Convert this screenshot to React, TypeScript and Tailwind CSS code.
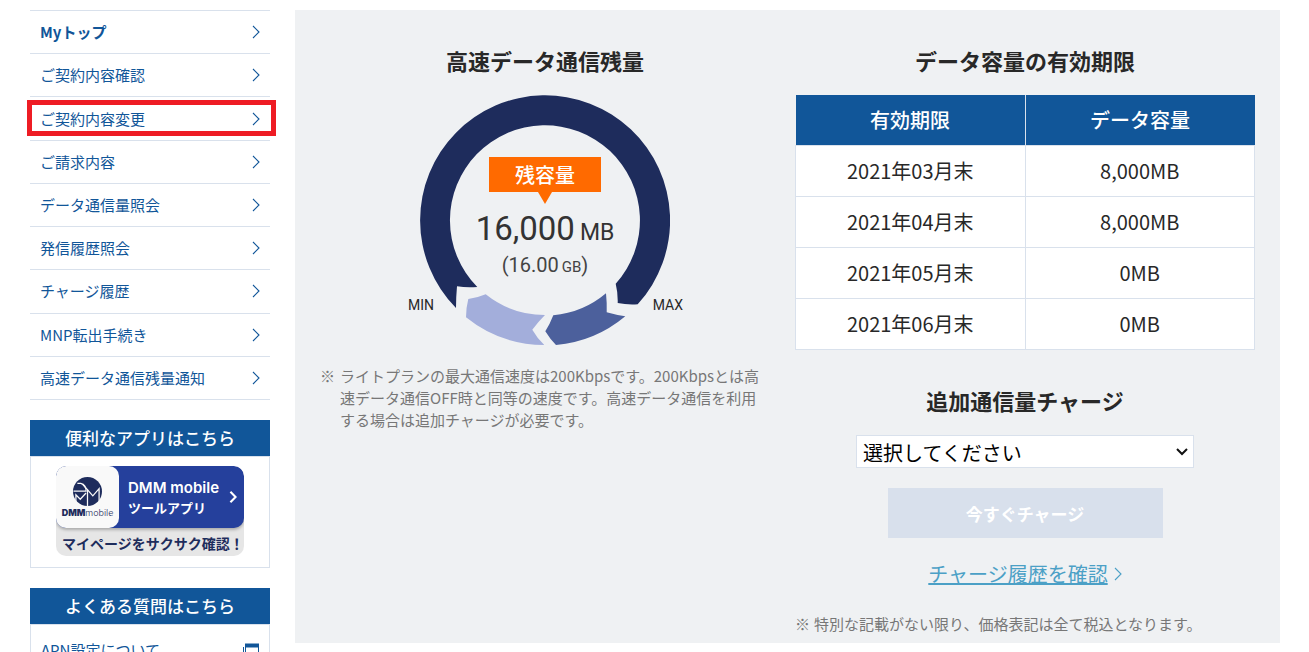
import { clsx } from "clsx";

const menu = [
  { label: "Myトップ", bold: true },
  { label: "ご契約内容確認" },
  { label: "ご契約内容変更", marked: true },
  { label: "ご請求内容" },
  { label: "データ通信量照会" },
  { label: "発信履歴照会" },
  { label: "チャージ履歴" },
  { label: "MNP転出手続き" },
  { label: "高速データ通信残量通知" },
];

const limits = [
  { month: "2021年03月末", amount: "8,000MB" },
  { month: "2021年04月末", amount: "8,000MB" },
  { month: "2021年05月末", amount: "0MB" },
  { month: "2021年06月末", amount: "0MB" },
];

export default function App() {
  return (
    <div className="flex h-screen items-start gap-[25px] overflow-hidden bg-white pt-[10px] pr-[29px] pl-[30px] font-['Noto_Sans_CJK_JP',sans-serif] text-[#282828]">
      <Sidebar />
      <main className="grid flex-1 grid-cols-[minmax(0,45fr)_minmax(0,46fr)] gap-[25px] bg-[#eff1f3] px-[25px] pt-[34px] pb-2">
        <RemainingData />
        <section>
          <Heading>データ容量の有効期限</Heading>
          <LimitTable />
          <Charge />
        </section>
      </main>
    </div>
  );
}

function Sidebar() {
  return (
    <aside className="w-[240px] shrink-0">
      <nav>
        <ul className="flex min-h-[390px] flex-col border-t border-[#d9e1ec]">
          {menu.map((item) => (
            <li key={item.label} className="relative flex grow border-b border-[#d9e1ec]">
              <a
                href="#"
                className={clsx(
                  "flex grow items-center justify-between px-[10px] text-[15px] leading-[22px] text-[#115699]",
                  item.bold && "font-bold"
                )}
              >
                {item.label}
                <Chevron className="h-[14px] w-[8px]" />
              </a>
              {item.marked && (
                <span className="pointer-events-none absolute top-[3px] -right-[6px] bottom-[4px] -left-[3px] border-[5px] border-[#ee1c24]" />
              )}
            </li>
          ))}
        </ul>
      </nav>

      <SideBox title="便利なアプリはこちら">
        <div className="flex justify-center pt-[9px] pb-[11px]">
          <AppBanner />
        </div>
      </SideBox>

      <SideBox title="よくある質問はこちら">
        <a
          href="#"
          className="flex items-center justify-between px-[10px] pt-[14px] text-[15px] leading-[22px] text-[#115699]"
        >
          APN設定について
          <WindowIcon />
        </a>
      </SideBox>
    </aside>
  );
}

function SideBox({ title, children }: { title: string; children: React.ReactNode }) {
  return (
    <section className="mt-5">
      <h2 className="bg-[#115699] py-[6px] text-center text-[17px] leading-6 font-medium text-white">
        {title}
      </h2>
      <div className="border border-[#d9e1ec]">{children}</div>
    </section>
  );
}

function AppBanner() {
  return (
    <a href="#" className="block w-[188px] overflow-hidden rounded-[10px] bg-[#e6e6e6] text-[#1e2c5c]">
      <span className="flex h-[62px] items-stretch rounded-[10px] bg-[#25409c] shadow-[0_2px_3px_#00000040]">
        <span className="flex w-[63px] flex-col items-center rounded-[10px] bg-[#f9f9f9] pt-[11px]">
          <BrandMark />
          <span className="mt-[1px] font-['Inter',sans-serif] text-[9px] leading-[12px]">
            <b className="font-black">DMM</b>
            <span className="font-light">mobile</span>
          </span>
        </span>
        <span className="flex grow items-center justify-between pr-[7px] pl-[9px] text-white">
          <span className="flex flex-col pt-[2px]">
            <span className="font-['Inter',sans-serif] text-[15px] leading-5 font-semibold">DMM mobile</span>
            <span className="text-[13px] leading-5 font-bold">ツールアプリ</span>
          </span>
          <Chevron className="h-[12px] w-[8px]" stroke={2.5} />
        </span>
      </span>
      <span className="block pt-[5px] pb-[3px] pl-[6px] text-[14px] leading-5 font-bold whitespace-nowrap">
        マイページをサクサク確認！
      </span>
    </a>
  );
}

function RemainingData() {
  return (
    <section>
      <Heading>高速データ通信残量</Heading>
      <div className="relative mx-auto mt-[18px] size-[250px] font-['Roboto',sans-serif]">
        <svg viewBox="0 0 250 250" className="size-full">
          <path fill="#1e2c5c" d="M36 213A125 125 0 1 1 217.700 209.300Q207 210 197.700 208Q198 198 195.700 188.700A95 95 0 1 0 57.300 192Q47 193 37 191.300Q36 202 36 213Z" />
          <path fill="#a3aedb" d="M48.300 204Q57 203 65.700 199.300A95 95 0 0 0 125 220Q118 227 112.300 234.700Q117 243 124.300 250A125 125 0 0 1 46 222.300Q46 213 48.300 204Z" />
          <path fill="#4c609c" d="M133.300 220.300A95 95 0 0 0 186 198.300Q187 208 186.700 217.300Q196 220 205.300 221.300A125 125 0 0 1 136 250Q130 244 125.300 236.300Q130 229 133.300 220.300Z" />
        </svg>
        <div className="absolute inset-x-0 top-[62px] flex flex-col items-center">
          <p className="w-[112px] bg-[#ff6a00] text-center font-['Noto_Sans_CJK_JP',sans-serif] text-[20px] leading-[35px] font-medium text-white">
            残容量
          </p>
          <span className="border-x-[7px] border-t-[12px] border-x-transparent border-t-[#ff6a00]" />
          <p className="mt-[5px] flex items-baseline gap-[5px] text-[33px] leading-10 text-[#333]">
            <span>16,000</span>
            <span className="text-[23px]">MB</span>
          </p>
          <p className="flex items-baseline text-[20px] leading-6 text-[#444]">
            <span>(16.00</span>
            <span className="pl-[3px] text-[15px]">GB</span>
            <span>)</span>
          </p>
        </div>
        <span className="absolute top-[200px] -left-[12px] text-[14px] leading-5">MIN</span>
        <span className="absolute top-[200px] -right-[13px] text-[14px] leading-5">MAX</span>
      </div>
      <p className="mt-5 flex gap-[5px] text-[15px] leading-[22px] text-[#777]">
        <span>※</span>
        <span>
          ライトプランの最大通信速度は200Kbpsです。200Kbpsとは高速データ通信OFF時と同等の速度です。高速データ通信を利用する場合は追加チャージが必要です。
        </span>
      </p>
    </section>
  );
}

function LimitTable() {
  return (
    <table className="mt-[18px] w-full table-fixed border-collapse text-center text-[20px] leading-[30px]">
      <thead>
        <tr className="h-[50px] bg-[#115699] text-white">
          <th className="border-r border-[#d9e1ec] font-medium">有効期限</th>
          <th className="font-medium">データ容量</th>
        </tr>
      </thead>
      <tbody>
        {limits.map((row) => (
          <tr key={row.month} className="h-[51px] bg-white">
            <td className="border border-[#d9e1ec]">{row.month}</td>
            <td className="border border-[#d9e1ec]">{row.amount}</td>
          </tr>
        ))}
      </tbody>
    </table>
  );
}

function Charge() {
  return (
    <div className="flex flex-col items-center pt-[34px]">
      <Heading>追加通信量チャージ</Heading>
      <div className="relative mt-[18px] w-[338px] max-w-full">
        <select
          aria-label="追加通信量"
          className="block h-[33px] w-full appearance-none border border-[#d9e1ec] bg-white px-[6px] pt-[2px] text-[20px] leading-[30px] text-black"
        >
          <option>選択してください</option>
        </select>
        <svg
          viewBox="0 0 12 8"
          fill="none"
          stroke="#111"
          strokeWidth="2"
          className="pointer-events-none absolute top-[13px] right-[6px] h-[8px] w-[12px]"
        >
          <path d="M1 1l5 5 5-5" />
        </svg>
      </div>
      <button
        type="button"
        disabled
        className="mt-5 h-[50px] w-[275px] bg-[#d8e0ec] pt-[2px] text-[17px] leading-6 font-bold text-white"
      >
        今すぐチャージ
      </button>
      <a href="#" className="mt-[21px] flex items-center gap-[6px] text-[20px] leading-[30px] text-[#4ba0c6]">
        <span className="underline">チャージ履歴を確認</span>
        <Chevron className="h-[14px] w-[8px]" />
      </a>
      <p className="mt-6 flex gap-1 self-start text-[15px] leading-[22px] text-[#777]">
        <span>※</span>
        <span>特別な記載がない限り、価格表記は全て税込となります。</span>
      </p>
    </div>
  );
}

function Heading({ children }: { children: React.ReactNode }) {
  return <h2 className="text-center text-[22px] leading-[33px] font-bold">{children}</h2>;
}

function Chevron({ className, stroke = 1.1 }: { className?: string; stroke?: number }) {
  return (
    <svg viewBox="0 0 8 14" fill="none" stroke="currentColor" strokeWidth={stroke} className={className}>
      <path d="M1 1l6 6-6 6" />
    </svg>
  );
}

function BrandMark() {
  return (
    <svg viewBox="0 0 30 30" className="size-[29px]">
      <circle cx="15" cy="15" r="15" fill="#1e2c5c" />
      <g fill="none" stroke="#f9f9f9" strokeWidth="1.3">
        <path d="M4.500 6.500H8Q13.500 8 13.500 14.500H0.500" />
        <path d="M10 7.500L20.500 19.500L27 12V26" />
        <path d="M15 30V13" />
        <path d="M3 26V18.500L7.500 23L13.500 16.500" />
      </g>
    </svg>
  );
}

function WindowIcon() {
  return (
    <svg viewBox="0 0 17 14" className="h-[14px] w-[17px]" fill="none" stroke="currentColor">
      <path d="M1.500 4v9.500H13" />
      <path d="M3.500 1.500h13v9h-13z" />
      <path d="M3 2.500h14" strokeWidth="4" />
    </svg>
  );
}
